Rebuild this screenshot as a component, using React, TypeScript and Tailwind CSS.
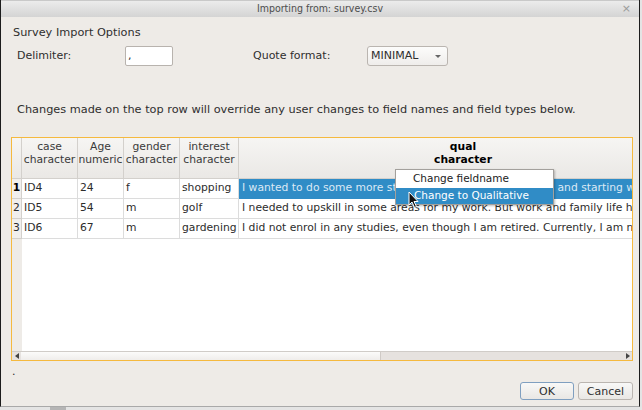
import React from "react";

const columns = [
  { w: 56, top: "case", bot: "character" },
  { w: 46, top: "Age", bot: "numeric" },
  { w: 56, top: "gender", bot: "character" },
  { w: 59, top: "interest", bot: "character" },
];

const rows = [
  {
    n: "1",
    cells: ["ID4", "24", "f", "shopping"],
    qual: "I wanted to do some more study after leaving High school and starting work but I never had the time",
  },
  {
    n: "2",
    cells: ["ID5", "54", "m", "golf"],
    qual: "I needed to upskill in some areas for my work. But work and family life have kept me busy",
  },
  {
    n: "3",
    cells: ["ID6", "67", "m", "gardening"],
    qual: "I did not enrol in any studies, even though I am retired. Currently, I am not interested",
  },
];

const Cursor = () => (
  <svg width="12" height="18" viewBox="0 0 12 18" className="absolute left-[396px] top-[53px]">
    <path d="M1 1 L1 14 L4 11 L6.5 16.5 L8.5 15.5 L6 10.5 L10 10.5 Z" fill="#111" stroke="#fff" strokeWidth="1" strokeLinejoin="round" />
  </svg>
);

const ImportTable = () => (
  <div className="relative h-[224px] w-[622px] border border-[#f5b93e] bg-white overflow-hidden flex flex-col text-[10.75px]">
    {/* header */}
    <div className="flex h-[41px] shrink-0 border-b border-[#d3d0cc] bg-gradient-to-b from-[#f6f5f3] to-[#eae8e5] text-[#3a3a3a]">
      <div className="w-[10px] shrink-0 border-r border-[#d3d0cc]" />
      {columns.map((c) => (
        <div
          key={c.top}
          style={{ width: c.w }}
          className="shrink-0 border-r border-[#d3d0cc] flex flex-col items-center pt-[2px] leading-[13px] whitespace-nowrap"
        >
          <span>{c.top}</span>
          <span>{c.bot}</span>
        </div>
      ))}
      <div className="w-[448px] shrink-0 flex flex-col items-center pt-[2px] leading-[13px] font-bold text-black">
        <span>qual</span>
        <span>character</span>
      </div>
    </div>

    {/* rows */}
    {rows.map((r, i) => (
      <div key={r.n} className="flex h-[20px] shrink-0 text-[#2c2c2c]">
        <div
          className={`w-[10px] shrink-0 border-r border-b border-[#d3d0cc] bg-[#f1efed] flex items-center justify-center leading-none ${
            i === 0 ? "font-bold text-black" : ""
          }`}
        >
          {r.n}
        </div>
        {r.cells.map((v, j) => (
          <div
            key={j}
            style={{ width: columns[j].w }}
            className="shrink-0 border-r border-b border-[#dcdcdc] px-[2px] flex items-center whitespace-nowrap overflow-hidden"
          >
            {v}
          </div>
        ))}
        <div
          className={`w-[448px] shrink-0 border-b px-[3px] flex items-center whitespace-nowrap overflow-hidden ${
            i === 0 ? "bg-[#308cc6] text-[#dce9f5] border-[#308cc6]" : "border-[#dcdcdc]"
          }`}
        >
          {r.qual}
        </div>
      </div>
    ))}

    {/* empty viewport */}
    <div className="flex flex-1">
      <div className="w-[10px] shrink-0 bg-[#eeebe7]" />
      <div className="flex-1 bg-white" />
    </div>

    {/* horizontal scrollbar */}
    <div className="flex h-[9px] shrink-0 border-t border-[#d0ccc8] bg-[#e6e2df]">
      <div className="w-[9px] flex items-center justify-center">
        <div className="w-0 h-0 border-y-[3px] border-y-transparent border-r-[4px] border-r-[#444]" />
      </div>
      <div className="w-[360px] border-r border-[#cfcac6] bg-gradient-to-b from-[#fbfbfa] to-[#efedeb]" />
      <div className="flex-1" />
      <div className="w-[9px] flex items-center justify-center">
        <div className="w-0 h-0 border-y-[3px] border-y-transparent border-l-[4px] border-l-[#444]" />
      </div>
    </div>

    {/* context menu */}
    <div className="absolute left-[383px] top-[31px] w-[159px] border border-[#a3a09c] bg-white shadow-[1px_1px_2px_rgba(0,0,0,0.25)] text-[10.5px]">
      <div className="h-[18px] pl-[17px] flex items-center text-[#222]">Change fieldname</div>
      <div className="h-[16px] pl-[18px] flex items-center bg-[#308cc6] text-white">Change to Qualitative</div>
    </div>
    <Cursor />
  </div>
);

export default function App() {
  return (
    <div className="relative w-[642px] h-[410px] bg-[#e4e4e4] overflow-hidden font-['DejaVu_Sans',sans-serif] text-[11px] text-[#2e2e2e]">
      <div className="w-[640px] h-[407px] border-x border-b border-x-[#1c1c1c] border-b-[#a9a9a9] bg-[#eeebe7] flex flex-col">
        {/* title bar */}
        <div className="relative h-[17px] shrink-0 border-t border-[#c9c9c9] bg-gradient-to-b from-[#ececec] to-[#d4d4d4] flex items-center justify-center">
          <span className="font-['DejaVu_Sans_Condensed','DejaVu_Sans',sans-serif] text-[10.5px] text-[#4d4d4d]">
            Importing from: survey.csv
          </span>
          <span className="absolute right-[8px] top-[1px] text-[11px] leading-[14px] text-[#9a9a9a]">×</span>
        </div>

        <div className="flex flex-col pl-[10px] pr-[6px]">
          <div className="mt-[9px] ml-[2px] leading-[14px] text-[11.3px]">Survey Import Options</div>

          <div className="mt-[6px] h-[20px] flex items-center">
            <span className="ml-[6px] w-[108px]">Delimiter:</span>
            <div className="w-[48px] h-[20px] border border-[#b8b3ae] rounded-[2px] bg-white pl-[2px] flex items-center">,</div>
            <span className="ml-[80px] w-[114px]">Quote format:</span>
            <div className="w-[81px] h-[20px] border border-[#bab5b0] rounded-[3px] bg-gradient-to-b from-[#fcfcfb] to-[#efedeb] pl-[3px] pr-[6px] flex items-center justify-between">
              <span>MINIMAL</span>
              <div className="w-0 h-0 border-x-[3px] border-x-transparent border-t-[3px] border-t-[#666]" />
            </div>
          </div>

          <div className="mt-[37px] ml-[6px] leading-[14px] text-[11.3px] whitespace-nowrap">
            Changes made on the top row will override any user changes to field names and field types below.
          </div>

          <div className="mt-[20px]">
            <ImportTable />
          </div>

          <div className="mt-[4px] ml-[1px] leading-[14px]">.</div>

          <div className="mt-[3px] flex justify-end gap-[4px]">
            <button className="w-[54px] h-[18px] border border-[#7f9fc0] rounded-[3px] bg-gradient-to-b from-[#f8f8f7] to-[#e9e7e4] leading-none text-[#2e2e2e]">
              OK
            </button>
            <button className="w-[55px] h-[18px] border border-[#bab5b0] rounded-[3px] bg-gradient-to-b from-[#f8f8f7] to-[#e9e7e4] leading-none text-[#2e2e2e]">
              Cancel
            </button>
          </div>
        </div>
      </div>
      <div className="absolute left-[50px] top-[407px] w-[16px] h-[3px] bg-[#b5b5b5]" />
    </div>
  );
}
